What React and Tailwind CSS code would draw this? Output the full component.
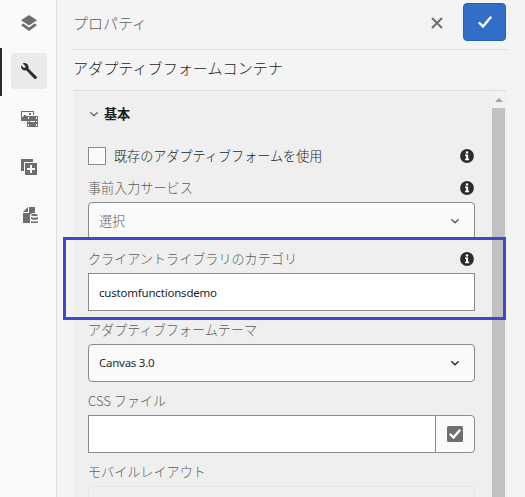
import React, { useState } from "react";

const InfoIcon = () => (
  <svg width="14" height="14" viewBox="0 0 15 15" className="mr-px shrink-0">
    <circle cx="7.5" cy="7.5" r="7.4" fill="#2c2c2c" />
    <circle cx="7.5" cy="3.7" r="1.4" fill="#fff" />
    <path d="M5.4 6h3.3v4.5h1.1V12H5.4v-1.5h1.1v-3H5.4z" fill="#fff" />
  </svg>
);

const Chevron = ({ className }) => (
  <svg width="8" height="5" viewBox="0 0 8 5" className={className}>
    <path
      d="M.8 .8 4 3.8 7.2 .8"
      fill="none"
      stroke="currentColor"
      strokeWidth="1.5"
      strokeLinecap="round"
    />
  </svg>
);

const railIcons = [
  {
    name: "layers",
    icon: (
      <g fill="#6e6e6e">
        <path d="M8 0 16 5.3 8 10.6 0 5.3z" />
        <path d="M2.4 8.6 0 10.3 8 16l8-5.7-2.4-1.7L8 12.5z" />
      </g>
    ),
  },
  {
    name: "properties",
    icon: (
      <path
        fill="#2c2c2c"
        d="M1.8.4 4.6 3.2 4.2 4.6 2.9 4.9.2 2.2C-.3 4.1.4 6 2 6.9c1 .6 2.2.7 3.2.4l7.9 8.2a1.5 1.5 0 0 0 2.2 0 1.5 1.5 0 0 0 0-2.2L7.4 5.4C7.8 3.9 7.5 2.3 6.4 1.2 5.2.1 3.4-.2 1.8.4z"
      />
    ),
  },
  {
    name: "assets",
    icon: (
      <g shapeRendering="crispEdges">
        <path fill="#6e6e6e" d="M0 0h13v4h-1V1H1v5l3-2 2 1v5H0z" />
        <path fill="#6e6e6e" d="M8 2h2v2H8z" />
        <path fill="#6e6e6e" d="M6 5h11v11H6z" />
        <path
          fill="#fafafa"
          d="M7 6h1v2H7zM7 10h1v1H7zM7 13h1v2H7zM15 6h1v2h-1zM15 10h1v1h-1zM15 13h1v2h-1zM9 10h5v1H9z"
        />
      </g>
    ),
  },
  {
    name: "components",
    icon: (
      <g fill="#6e6e6e" shapeRendering="crispEdges">
        <path d="M0 0h12v3H3v9H0z" />
        <path
          fillRule="evenodd"
          d="M4 4h12v12H4zM9 6v3H6v2h3v3h2v-3h3V9h-3V6z"
        />
      </g>
    ),
  },
  {
    name: "data",
    icon: (
      <g fill="#6e6e6e">
        <path d="M7 0v5H2z" />
        <path d="M8 0h6v6c-3 0-5 .8-5 2v8H2V6h6z" />
        <path d="M10 8c0-1.3 7-1.3 7 0s-7 1.3-7 0zM10 10c1.5 1 5.5 1 7 0v2c-1.5 1-5.5 1-7 0zM10 14c1.5.8 5.5.8 7 0v1.8c-1.5 1.2-5.5 1.2-7 0z" />
      </g>
    ),
  },
];

const Label = ({ children, info }) => (
  <div className="flex h-[33px] shrink-0 items-center justify-between pt-[5px] text-[#5c5c5c]">
    <span>{children}</span>
    {info && <InfoIcon />}
  </div>
);

const Select = ({ value, className }) => (
  <button
    type="button"
    className={`flex h-[38px] w-full shrink-0 items-center justify-between rounded border border-[#8a8a8a] bg-[#fafafa] pl-2.5 pr-[15px] ${className}`}
  >
    <span>{value}</span>
    <Chevron />
  </button>
);

const App = () => {
  const [activeTab, setActiveTab] = useState("properties");
  const [category, setCategory] = useState("customfunctionsdemo");

  return (
    <div className="relative flex h-[497px] w-[525px] overflow-hidden bg-[#f4f4f4] font-['Noto_Sans_CJK_JP',sans-serif] text-[13.1px] font-light leading-5 text-[#1c1c1c]">
      {/* Side rail */}
      <nav className="flex w-[57px] shrink-0 flex-col border-r border-[#dcdcdc] bg-[#fafafa]">
        {railIcons.map(({ name, icon }) => (
          <button
            key={name}
            type="button"
            onClick={() => setActiveTab(name)}
            className={`flex h-12 shrink-0 items-center border-l-2 pb-0.5 pl-[9px] ${
              activeTab === name ? "border-[#2c2c2c]" : "border-transparent"
            }`}
          >
            <span
              className={`flex size-9 items-center justify-center rounded ${
                activeTab === name ? "bg-[#eaeaea]" : ""
              }`}
            >
              <svg
                width="17"
                height="16"
                viewBox="0 0 17 16"
                className="ml-px"
              >
                {icon}
              </svg>
            </span>
          </button>
        ))}
      </nav>

      {/* Properties panel */}
      <main className="ml-4 flex w-[434px] flex-col">
        <header className="flex h-[50px] shrink-0 items-start border-b border-[#dcdcdc] pr-px">
          <h1 className="mt-[13px] text-[15px] font-light text-[#5c5c5c]">
            プロパティ
          </h1>
          <button type="button" className="ml-auto mr-5 mt-[17px] text-[#6e6e6e]">
            <svg width="12" height="12" viewBox="0 0 12 12">
              <path
                d="m1 1 10 10M11 1 1 11"
                stroke="currentColor"
                strokeWidth="2"
              />
            </svg>
          </button>
          <button
            type="button"
            className="mt-[3px] flex h-[38px] w-[43px] items-center justify-center rounded border border-[#2362b8] bg-[#326ec8]"
          >
            <svg width="14" height="12" viewBox="0 0 14 12">
              <path
                d="m1.5 7 3.5 3.5L12.5 1.5"
                fill="none"
                stroke="#fff"
                strokeWidth="2.4"
                strokeLinecap="round"
              />
            </svg>
          </button>
        </header>
        <h2 className="flex h-[41px] shrink-0 items-center border-b border-[#dcdcdc] pb-[7px] text-[15.1px] font-light">
          アダプティブフォームコンテナ
        </h2>

        <div className="flex min-h-0 flex-1">
          <form className="flex w-[417px] flex-col bg-[#efefef] px-[15px]">
            <div className="mt-[13px] flex h-5 shrink-0 items-center gap-[6px] pl-[2px] font-bold">
              <Chevron className="text-[#6e6e6e]" />
              基本
            </div>
            <div className="mt-[23px] flex h-[18px] shrink-0 items-center">
              <span className="size-[18px] border border-[#8a8a8a] bg-[#fafafa]" />
              <span className="ml-2">既存のアダプティブフォームを使用</span>
              <span className="ml-auto">
                <InfoIcon />
              </span>
            </div>
            <div className="h-1 shrink-0" />
            <Label info>事前入力サービス</Label>
            <Select value="選択" className="text-[#5c5c5c]" />
            <Label info>クライアントライブラリのカテゴリ</Label>
            <input
              value={category}
              onChange={(e) => setCategory(e.target.value)}
              className="h-[38px] w-full shrink-0 border border-[#8a8a8a] bg-white px-2.5 font-['Noto_Sans',sans-serif] text-[11.5px] font-normal tracking-[-0.2px] outline-none"
            />
            <Label>アダプティブフォームテーマ</Label>
            <Select
              value="Canvas 3.0"
              className="font-['Noto_Sans',sans-serif] text-[11.5px] font-normal tracking-[-0.25px] text-[#2c2c2c]"
            />
            <Label>CSS ファイル</Label>
            <div className="flex h-[38px] shrink-0">
              <input className="min-w-0 flex-1 border border-r-0 border-[#8a8a8a] bg-white px-2.5 outline-none" />
              <button
                type="button"
                className="flex w-10 items-center justify-center rounded-r border border-[#8a8a8a] bg-[#fafafa]"
              >
                <svg width="16" height="16" viewBox="0 0 16 16">
                  <rect width="16" height="16" rx="1.5" fill="#6e6e6e" />
                  <path
                    d="m3.5 8.5 3 3L12.5 4.5"
                    fill="none"
                    stroke="#fff"
                    strokeWidth="2.4"
                    strokeLinecap="round"
                  />
                </svg>
              </button>
            </div>
            <Label>モバイルレイアウト</Label>
            <div className="h-[38px] shrink-0 border border-[#e6e6e6]" />
          </form>

          {/* Scrollbar */}
          <div className="flex w-[17px] flex-col items-center bg-[#f1f1f1]">
            <div className="flex h-[17px] shrink-0 items-center">
              <svg width="8" height="4" viewBox="0 0 8 4">
                <path d="M0 4 4 0l4 4z" fill="#a3a3a3" />
              </svg>
            </div>
            <div className="w-[13px] flex-1 bg-[#c1c1c1]" />
          </div>
        </div>
      </main>

      {/* Highlight around the category field */}
      <div className="pointer-events-none absolute left-[63px] top-[237px] h-[83px] w-[443px] border-[3px] border-[#3f48cc]" />
    </div>
  );
};

export default App;
